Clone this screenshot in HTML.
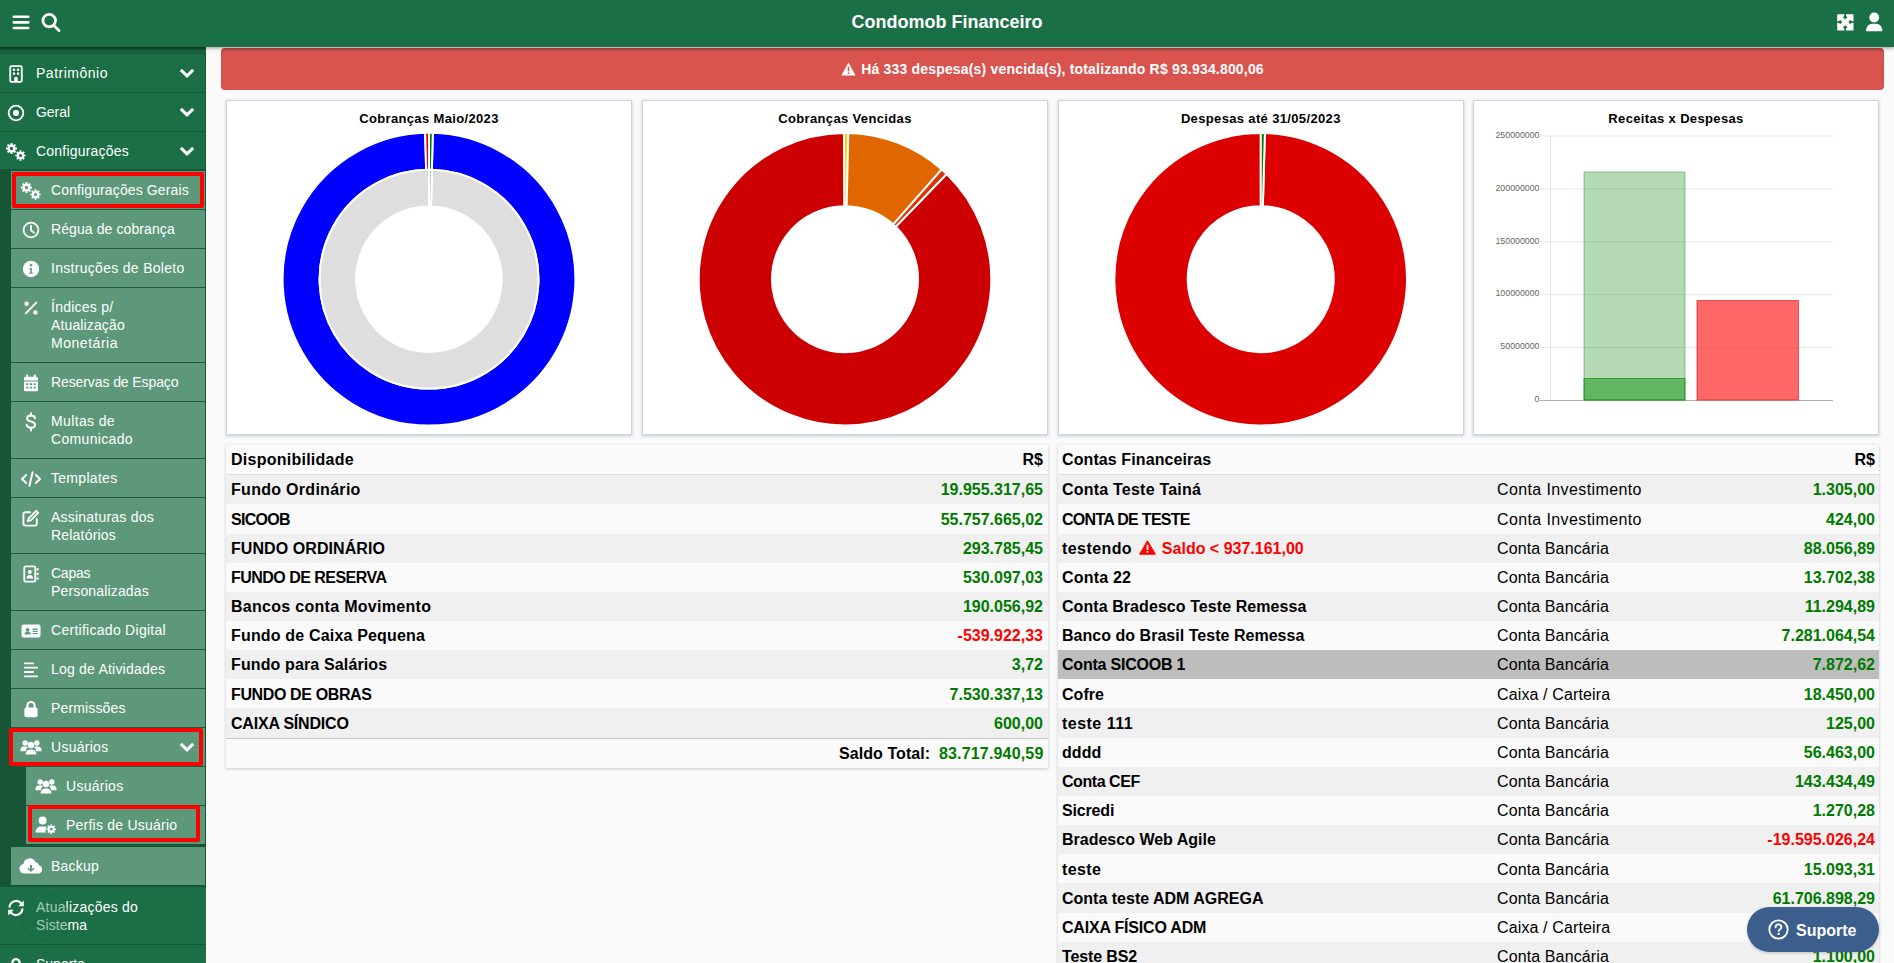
<!DOCTYPE html><html><head><meta charset="utf-8"><title>Condomob Financeiro</title><style>
*{margin:0;padding:0;box-sizing:border-box}
html,body{width:1894px;height:963px;overflow:hidden;background:#fafafa;font-family:"Liberation Sans",sans-serif}
.a{position:absolute}
.hdr{left:0;top:0;width:1894px;height:47px;background:#1b6f47;z-index:5;box-shadow:0 1px 4px rgba(0,0,0,.4)}
.title{left:0;width:1894px;top:11px;text-align:center;color:#fff;font-weight:bold;font-size:18px;line-height:22px}
.sb{left:0;top:46px;width:206px;height:917px;background:#1b6e46;overflow:hidden;border-right:1px solid #155a39}
.it{position:absolute;color:#fff;font-size:14px;line-height:18px;letter-spacing:.15px}
.alert{left:221px;top:48px;width:1663px;height:42px;background:#d9534f;border-radius:4px;color:#fff;font-weight:bold;font-size:14px;letter-spacing:.18px;line-height:42px;text-align:center;box-shadow:inset 0 2px 2px rgba(0,0,0,.15)}
.card{background:#fff;border:1px solid #ccd4de;box-shadow:0 1px 3px rgba(40,50,80,.25)}
.ct{position:absolute;left:0;right:0;top:9px;text-align:center;font-weight:bold;font-size:13px;letter-spacing:.35px;line-height:16px;color:#000}
.tbl{background:#fafafa;box-shadow:0 1px 3px rgba(40,50,80,.25)}
.row{position:absolute;left:0;right:0;height:29.27px}
.odd{background:#f0f0f0}
.tx{position:absolute;font-size:16px;line-height:21px;top:4px;color:#000;white-space:nowrap}
.b{font-weight:bold}
.g{color:#007a00;font-weight:bold}
.r{color:#f00;font-weight:bold}
</style></head><body>
<div class="a hdr">
<svg class="a" style="left:11px;top:13px" width="20" height="18" viewBox="0 0 20 18"><g stroke="#fff" stroke-width="2.6" stroke-linecap="round"><line x1="2.8" y1="3.7" x2="17.2" y2="3.7"/><line x1="2.8" y1="9.4" x2="17.2" y2="9.4"/><line x1="2.8" y1="15" x2="17.2" y2="15"/></g></svg>
<svg class="a" style="left:40px;top:12px" width="22" height="21" viewBox="0 0 22 21"><circle cx="9.2" cy="8.6" r="6.3" fill="none" stroke="#fff" stroke-width="2.8"/><line x1="13.8" y1="13.5" x2="19" y2="18.5" stroke="#fff" stroke-width="2.8" stroke-linecap="round"/></svg>
<div class="a title">Condomob Financeiro</div>
<svg class="a" style="left:1837px;top:14px" width="17" height="17" viewBox="0 0 17 17"><rect x="0.2" y="0.2" width="16.3" height="16.2" rx=".4" fill="#fff"/><g fill="#1b6f47"><path d="M8.2 1.2l2.3 2-2.3 2-2.3-2z"/><rect x="7.4" y="0" width="1.6" height="2.4"/><path d="M8.2 11.2l2.3 2-2.3 2-2.3-2z"/><rect x="7.4" y="14" width="1.6" height="3"/><path d="M3.2 5.7l2 2.3-2 2.3-2-2.3z"/><rect x="0" y="7.2" width="2.4" height="1.6"/><path d="M13.3 5.7l2 2.3-2 2.3-2-2.3z"/><rect x="14.2" y="7.2" width="3" height="1.6"/></g></svg>
<svg class="a" style="left:1865px;top:12px" width="19" height="21" viewBox="0 0 19 21"><g fill="#fff"><circle cx="9.2" cy="5.5" r="4.9"/><path d="M1 19.3c0-4.6 3-7.5 6-7.5h4.4c3 0 6 2.9 6 7.5z"/></g></svg>
</div>
<div class="a sb"></div>
<div class="a" style="left:0px;top:46px;width:206px;height:7px;background:#1a6843;background:linear-gradient(#0e3f27,#17603d 60%,#1a6843)"></div>
<div class="a" style="left:0px;top:53px;width:206px;height:1px;background:#145a38;"></div>
<div class="a" style="left:0px;top:92px;width:206px;height:1px;background:#145a38;"></div>
<div class="a" style="left:0px;top:131px;width:206px;height:1px;background:#145a38;"></div>
<svg class="a" style="left:9px;top:65px" width="14" height="18" viewBox="0 0 14 18"><rect x="1.2" y="1.2" width="11.6" height="15.6" rx="1.3" fill="none" stroke="#fff" stroke-width="1.8"/><g fill="#fff"><rect x="3.8" y="3.6" width="2.3" height="2.3"/><rect x="7.9" y="3.6" width="2.3" height="2.3"/><rect x="3.8" y="7.5" width="2.3" height="2.3"/><rect x="7.9" y="7.5" width="2.3" height="2.3"/><path d="M5.2 16.5v-3a1.8 1.8 0 0 1 3.6 0v3z"/></g></svg>
<div class="it" style="left:36px;top:64.45px;letter-spacing:0;"><span style="letter-spacing:0.511px">Patrimônio</span></div>
<svg class="a" style="left:179px;top:68.3px" width="16" height="10" viewBox="0 0 16 10"><path d="M1.8 1.8l6.2 6 6.2-6" fill="none" stroke="#fff" stroke-width="3" stroke-linecap="butt" stroke-linejoin="miter"/></svg>
<svg class="a" style="left:7px;top:104px" width="18" height="18" viewBox="0 0 18 18"><circle cx="9" cy="9" r="7.3" fill="none" stroke="#fff" stroke-width="1.8"/><circle cx="9" cy="9" r="3.1" fill="#fff"/></svg>
<div class="it" style="left:36px;top:103.45px;letter-spacing:0;"><span style="letter-spacing:-0.044px">Geral</span></div>
<svg class="a" style="left:179px;top:107.3px" width="16" height="10" viewBox="0 0 16 10"><path d="M1.8 1.8l6.2 6 6.2-6" fill="none" stroke="#fff" stroke-width="3" stroke-linecap="butt" stroke-linejoin="miter"/></svg>
<svg class="a" style="left:5px;top:142px" width="22" height="20" viewBox="0 0 22 20"><path fill="#fff" fill-rule="evenodd" d="M5.40 2.62 L5.59 0.97 L7.41 0.97 L7.60 2.62 L8.46 2.98 L9.76 1.95 L11.05 3.24 L10.02 4.54 L10.38 5.40 L12.03 5.59 L12.03 7.41 L10.38 7.60 L10.02 8.46 L11.05 9.76 L9.76 11.05 L8.46 10.02 L7.60 10.38 L7.41 12.03 L5.59 12.03 L5.40 10.38 L4.54 10.02 L3.24 11.05 L1.95 9.76 L2.98 8.46 L2.62 7.60 L0.97 7.41 L0.97 5.59 L2.62 5.40 L2.98 4.54 L1.95 3.24 L3.24 1.95 L4.54 2.98Z M4.80 6.50 a1.70 1.70 0 1 0 3.40 0 a1.70 1.70 0 1 0 -3.40 0Z"/><path fill="#fff" fill-rule="evenodd" d="M14.48 9.90 L14.65 8.37 L16.35 8.37 L16.52 9.90 L17.32 10.23 L18.53 9.27 L19.73 10.47 L18.77 11.68 L19.10 12.48 L20.63 12.65 L20.63 14.35 L19.10 14.52 L18.77 15.32 L19.73 16.53 L18.53 17.73 L17.32 16.77 L16.52 17.10 L16.35 18.63 L14.65 18.63 L14.48 17.10 L13.68 16.77 L12.47 17.73 L11.27 16.53 L12.23 15.32 L11.90 14.52 L10.37 14.35 L10.37 12.65 L11.90 12.48 L12.23 11.68 L11.27 10.47 L12.47 9.27 L13.68 10.23Z M13.90 13.50 a1.60 1.60 0 1 0 3.20 0 a1.60 1.60 0 1 0 -3.20 0Z"/></svg>
<div class="it" style="left:36px;top:142.45px;letter-spacing:0;"><span style="letter-spacing:0.205px">Configurações</span></div>
<svg class="a" style="left:179px;top:146.3px" width="16" height="10" viewBox="0 0 16 10"><path d="M1.8 1.8l6.2 6 6.2-6" fill="none" stroke="#fff" stroke-width="3" stroke-linecap="butt" stroke-linejoin="miter"/></svg>
<div class="a" style="left:0px;top:169px;width:206px;height:718px;background:#165536;"></div>
<div class="a" style="left:11px;top:171px;width:194px;height:38px;background:#5d987a;"></div>
<div class="a" style="left:11px;top:209px;width:194px;height:1px;background:#1a5a3a;"></div>
<svg class="a" style="left:20px;top:181px" width="22" height="20" viewBox="0 0 22 20"><path fill="#fff" fill-rule="evenodd" d="M5.40 2.62 L5.59 0.97 L7.41 0.97 L7.60 2.62 L8.46 2.98 L9.76 1.95 L11.05 3.24 L10.02 4.54 L10.38 5.40 L12.03 5.59 L12.03 7.41 L10.38 7.60 L10.02 8.46 L11.05 9.76 L9.76 11.05 L8.46 10.02 L7.60 10.38 L7.41 12.03 L5.59 12.03 L5.40 10.38 L4.54 10.02 L3.24 11.05 L1.95 9.76 L2.98 8.46 L2.62 7.60 L0.97 7.41 L0.97 5.59 L2.62 5.40 L2.98 4.54 L1.95 3.24 L3.24 1.95 L4.54 2.98Z M4.80 6.50 a1.70 1.70 0 1 0 3.40 0 a1.70 1.70 0 1 0 -3.40 0Z"/><path fill="#fff" fill-rule="evenodd" d="M14.48 9.90 L14.65 8.37 L16.35 8.37 L16.52 9.90 L17.32 10.23 L18.53 9.27 L19.73 10.47 L18.77 11.68 L19.10 12.48 L20.63 12.65 L20.63 14.35 L19.10 14.52 L18.77 15.32 L19.73 16.53 L18.53 17.73 L17.32 16.77 L16.52 17.10 L16.35 18.63 L14.65 18.63 L14.48 17.10 L13.68 16.77 L12.47 17.73 L11.27 16.53 L12.23 15.32 L11.90 14.52 L10.37 14.35 L10.37 12.65 L11.90 12.48 L12.23 11.68 L11.27 10.47 L12.47 9.27 L13.68 10.23Z M13.90 13.50 a1.60 1.60 0 1 0 3.20 0 a1.60 1.60 0 1 0 -3.20 0Z"/></svg>
<div class="it" style="left:51px;top:180.95px;letter-spacing:0;"><span style="letter-spacing:0.118px">Configurações Gerais</span></div>
<div class="a" style="left:11px;top:210px;width:194px;height:38px;background:#5d987a;"></div>
<div class="a" style="left:11px;top:248px;width:194px;height:1px;background:#1a5a3a;"></div>
<svg class="a" style="left:22px;top:221px" width="18" height="18" viewBox="0 0 18 18"><circle cx="9" cy="9" r="7.4" fill="none" stroke="#fff" stroke-width="1.8"/><path d="M9 4.6v4.6l3 2.4" fill="none" stroke="#fff" stroke-width="1.8" stroke-linecap="round" stroke-linejoin="round"/></svg>
<div class="it" style="left:51px;top:219.95px;letter-spacing:0;"><span style="letter-spacing:0.092px">Régua de cobrança</span></div>
<div class="a" style="left:11px;top:249px;width:194px;height:38px;background:#5d987a;"></div>
<div class="a" style="left:11px;top:287px;width:194px;height:1px;background:#1a5a3a;"></div>
<svg class="a" style="left:22px;top:260px" width="18" height="18" viewBox="0 0 18 18"><circle cx="9" cy="9" r="8.2" fill="#fff"/><circle cx="9" cy="5.3" r="1.3" fill="#5d987a"/><path d="M7.4 7.9h2.4v4.6h1v1.3H7.3v-1.3h1v-3.3h-.9z" fill="#5d987a"/></svg>
<div class="it" style="left:51px;top:258.95px;letter-spacing:0;"><span style="letter-spacing:0.300px">Instruções de Boleto</span></div>
<div class="a" style="left:11px;top:288px;width:194px;height:74px;background:#5d987a;"></div>
<div class="a" style="left:11px;top:362px;width:194px;height:1px;background:#1a5a3a;"></div>
<svg class="a" style="left:23px;top:300px" width="16" height="16" viewBox="0 0 16 16"><g fill="#fff"><circle cx="3.6" cy="3.8" r="2.2"/><circle cx="12.4" cy="12.4" r="2.2"/></g><line x1="13.2" y1="2.6" x2="2.8" y2="13.4" stroke="#fff" stroke-width="2" stroke-linecap="round"/></svg>
<div class="it" style="left:51px;top:297.95px;letter-spacing:0;"><span style="letter-spacing:0.239px">Índices p/</span><br><span style="letter-spacing:0.131px">Atualização</span><br><span style="letter-spacing:0.531px">Monetária</span></div>
<div class="a" style="left:11px;top:363px;width:194px;height:38px;background:#5d987a;"></div>
<div class="a" style="left:11px;top:401px;width:194px;height:1px;background:#1a5a3a;"></div>
<svg class="a" style="left:23px;top:374px" width="16" height="18" viewBox="0 0 16 18"><g fill="#fff"><rect x="3.2" y="0.6" width="2" height="3.4" rx=".8"/><rect x="10.8" y="0.6" width="2" height="3.4" rx=".8"/><path d="M1 4.2a1.5 1.5 0 0 1 1.5-1.5h11a1.5 1.5 0 0 1 1.5 1.5V6.5H1z"/><path fill-rule="evenodd" d="M1 7.5h14v8.2a1.5 1.5 0 0 1-1.5 1.5h-11A1.5 1.5 0 0 1 1 15.7zM3.2 9.3v1.7h2.2V9.3zM6.9 9.3v1.7h2.2V9.3zM10.6 9.3v1.7h2.2V9.3zM3.2 12.8v1.7h2.2v-1.7zM6.9 12.8v1.7h2.2v-1.7zM10.6 12.8v1.7h2.2v-1.7z"/></g></svg>
<div class="it" style="left:51px;top:372.95px;letter-spacing:0;"><span style="letter-spacing:-0.097px">Reservas de Espaço</span></div>
<div class="a" style="left:11px;top:402px;width:194px;height:56px;background:#5d987a;"></div>
<div class="a" style="left:11px;top:458px;width:194px;height:1px;background:#1a5a3a;"></div>
<svg class="a" style="left:24px;top:412px" width="14" height="20" viewBox="0 0 14 20"><path d="M11 6.2c-.3-1.6-1.8-2.6-4-2.6-2.3 0-3.9 1.1-3.9 2.9 0 1.8 1.4 2.4 3.9 3 2.6.6 4.1 1.3 4.1 3.2 0 1.8-1.6 3-4.1 3-2.4 0-4-1.1-4.3-2.9" fill="none" stroke="#fff" stroke-width="2" stroke-linecap="round"/><line x1="7" y1="1.2" x2="7" y2="3.6" stroke="#fff" stroke-width="2" stroke-linecap="round"/><line x1="7" y1="15.8" x2="7" y2="18.4" stroke="#fff" stroke-width="2" stroke-linecap="round"/></svg>
<div class="it" style="left:51px;top:411.95px;letter-spacing:0;"><span style="letter-spacing:0.359px">Multas de</span><br><span style="letter-spacing:0.334px">Comunicado</span></div>
<div class="a" style="left:11px;top:459px;width:194px;height:38px;background:#5d987a;"></div>
<div class="a" style="left:11px;top:497px;width:194px;height:1px;background:#1a5a3a;"></div>
<svg class="a" style="left:20px;top:470px" width="22" height="18" viewBox="0 0 22 18"><g fill="none" stroke="#fff" stroke-width="2" stroke-linecap="round" stroke-linejoin="round"><path d="M6.2 5l-4.2 4 4.2 4"/><path d="M15.8 5l4.2 4-4.2 4"/><path d="M12.6 2.2l-3.2 13.6"/></g></svg>
<div class="it" style="left:51px;top:468.95px;letter-spacing:0;"><span style="letter-spacing:0.291px">Templates</span></div>
<div class="a" style="left:11px;top:498px;width:194px;height:55px;background:#5d987a;"></div>
<div class="a" style="left:11px;top:553px;width:194px;height:1px;background:#1a5a3a;"></div>
<svg class="a" style="left:22px;top:509px" width="18" height="18" viewBox="0 0 18 18"><g fill="none" stroke="#fff" stroke-width="1.9" stroke-linejoin="round" stroke-linecap="round"><path d="M8 3.2H3.4A2 2 0 0 0 1.4 5.2v9.4a2 2 0 0 0 2 2h9.4a2 2 0 0 0 2-2V10"/><path d="M14.2 1.8l2 2-7.6 7.6-2.8.8.8-2.8z"/></g></svg>
<div class="it" style="left:51px;top:507.95px;letter-spacing:0;"><span style="letter-spacing:0.221px">Assinaturas dos</span><br><span style="letter-spacing:0.200px">Relatórios</span></div>
<div class="a" style="left:11px;top:554px;width:194px;height:56px;background:#5d987a;"></div>
<div class="a" style="left:11px;top:610px;width:194px;height:1px;background:#1a5a3a;"></div>
<svg class="a" style="left:23px;top:565px" width="16" height="18" viewBox="0 0 16 18"><rect x="1.3" y="1.3" width="11" height="15.4" rx="1.5" fill="none" stroke="#fff" stroke-width="1.8"/><g fill="#fff"><circle cx="6.8" cy="7" r="2"/><path d="M3.4 13.4c0-2 1.4-3.3 3.4-3.3s3.4 1.3 3.4 3.3z"/><rect x="13.6" y="3.2" width="2" height="2.2"/><rect x="13.6" y="7.8" width="2" height="2.2"/><rect x="13.6" y="12.4" width="2" height="2.2"/></g></svg>
<div class="it" style="left:51px;top:563.95px;letter-spacing:0;"><span style="letter-spacing:-0.251px">Capas</span><br><span style="letter-spacing:0.151px">Personalizadas</span></div>
<div class="a" style="left:11px;top:611px;width:194px;height:38px;background:#5d987a;"></div>
<div class="a" style="left:11px;top:649px;width:194px;height:1px;background:#1a5a3a;"></div>
<svg class="a" style="left:21px;top:623px" width="20" height="16" viewBox="0 0 20 16"><path fill="#fff" fill-rule="evenodd" d="M2.5 1.5h15a2 2 0 0 1 2 2v9a2 2 0 0 1-2 2h-15a2 2 0 0 1-2-2v-9a2 2 0 0 1 2-2zM6.6 5a1.9 1.9 0 1 0 .01 0zM3.4 11.6h6.4c0-1.9-1.3-3-3.2-3s-3.2 1.1-3.2 3zM11.6 5.6v1.3h5V5.6zM11.6 7.8v1.3h5V7.8zM11.6 10v1.3h5V10z"/></svg>
<div class="it" style="left:51px;top:620.95px;letter-spacing:0;"><span style="letter-spacing:0.275px">Certificado Digital</span></div>
<div class="a" style="left:11px;top:650px;width:194px;height:38px;background:#5d987a;"></div>
<div class="a" style="left:11px;top:688px;width:194px;height:1px;background:#1a5a3a;"></div>
<svg class="a" style="left:23px;top:661px" width="16" height="18" viewBox="0 0 16 18"><g fill="#fff"><rect x="1" y="1.5" width="10" height="1.8" rx=".6"/><rect x="1" y="5.8" width="14" height="1.8" rx=".6"/><rect x="1" y="10.1" width="10" height="1.8" rx=".6"/><rect x="1" y="14.4" width="14" height="1.8" rx=".6"/></g></svg>
<div class="it" style="left:51px;top:659.95px;letter-spacing:0;"><span style="letter-spacing:0.212px">Log de Atividades</span></div>
<div class="a" style="left:11px;top:689px;width:194px;height:38px;background:#5d987a;"></div>
<div class="a" style="left:11px;top:727px;width:194px;height:1px;background:#1a5a3a;"></div>
<svg class="a" style="left:23px;top:700px" width="16" height="18" viewBox="0 0 16 18"><path d="M4.4 8V5.6a3.6 3.6 0 0 1 7.2 0V8" fill="none" stroke="#fff" stroke-width="2.2"/><rect x="1.4" y="7.6" width="13.2" height="9.6" rx="2" fill="#fff"/></svg>
<div class="it" style="left:51px;top:698.95px;letter-spacing:0;"><span style="letter-spacing:0.139px">Permissões</span></div>
<div class="a" style="left:11px;top:728px;width:194px;height:38px;background:#5d987a;"></div>
<svg class="a" style="left:20px;top:738px" width="22" height="18" viewBox="0 0 22 18"><g fill="#fff"><circle cx="5.2" cy="5" r="2.7"/><circle cx="16.8" cy="5" r="2.7"/><circle cx="11" cy="7" r="3.2"/><path d="M0.4 12.2c0-2.1 1.4-3.6 3.2-3.6h3c.6 0 1.2.2 1.6.5-1.4.9-2.3 2.5-2.4 4.1H.4z"/><path d="M21.6 12.2c0-2.1-1.4-3.6-3.2-3.6h-3c-.6 0-1.2.2-1.6.5 1.4.9 2.3 2.5 2.4 4.1h5.4z"/><path d="M5.6 16.6c0-2.9 1.9-5.1 4.4-5.1h2c2.5 0 4.4 2.2 4.4 5.1z"/></g></svg>
<div class="it" style="left:51px;top:737.95px;letter-spacing:0;"><span style="letter-spacing:0.273px">Usuários</span></div>
<svg class="a" style="left:178.5px;top:742px" width="16" height="10" viewBox="0 0 16 10"><path d="M1.8 1.8l6.2 6 6.2-6" fill="none" stroke="#fff" stroke-width="3" stroke-linecap="butt" stroke-linejoin="miter"/></svg>
<div class="a" style="left:11px;top:766px;width:194px;height:1px;background:#1a5a3a;"></div>
<div class="a" style="left:11px;top:767px;width:15px;height:80px;background:#165536;"></div>
<div class="a" style="left:26px;top:767px;width:179px;height:38px;background:#5d987a;"></div>
<div class="a" style="left:26px;top:805px;width:179px;height:1px;background:#1a5a3a;"></div>
<svg class="a" style="left:35px;top:777px" width="22" height="18" viewBox="0 0 22 18"><g fill="#fff"><circle cx="5.2" cy="5" r="2.7"/><circle cx="16.8" cy="5" r="2.7"/><circle cx="11" cy="7" r="3.2"/><path d="M0.4 12.2c0-2.1 1.4-3.6 3.2-3.6h3c.6 0 1.2.2 1.6.5-1.4.9-2.3 2.5-2.4 4.1H.4z"/><path d="M21.6 12.2c0-2.1-1.4-3.6-3.2-3.6h-3c-.6 0-1.2.2-1.6.5 1.4.9 2.3 2.5 2.4 4.1h5.4z"/><path d="M5.6 16.6c0-2.9 1.9-5.1 4.4-5.1h2c2.5 0 4.4 2.2 4.4 5.1z"/></g></svg>
<div class="it" style="left:66px;top:776.95px;letter-spacing:0;"><span style="letter-spacing:0.273px">Usuários</span></div>
<div class="a" style="left:26px;top:806px;width:179px;height:38px;background:#5d987a;"></div>
<svg class="a" style="left:35px;top:816px" width="22" height="18" viewBox="0 0 22 18"><g fill="#fff"><circle cx="7.6" cy="4.6" r="4"/><path d="M0.6 16.6c0-3.6 2.4-6 5-6h4c.8 0 1.6.2 2.3.5-.9 1-1.4 2.3-1.4 3.7 0 .7.1 1.3.4 1.8z"/></g><path fill="#fff" fill-rule="evenodd" d="M15.26 9.88 L15.42 8.46 L16.98 8.46 L17.14 9.88 L17.88 10.18 L19.00 9.30 L20.10 10.40 L19.22 11.52 L19.52 12.26 L20.94 12.42 L20.94 13.98 L19.52 14.14 L19.22 14.88 L20.10 16.00 L19.00 17.10 L17.88 16.22 L17.14 16.52 L16.98 17.94 L15.42 17.94 L15.26 16.52 L14.52 16.22 L13.40 17.10 L12.30 16.00 L13.18 14.88 L12.88 14.14 L11.46 13.98 L11.46 12.42 L12.88 12.26 L13.18 11.52 L12.30 10.40 L13.40 9.30 L14.52 10.18Z M14.80 13.20 a1.40 1.40 0 1 0 2.80 0 a1.40 1.40 0 1 0 -2.80 0Z"/></svg>
<div class="it" style="left:66px;top:815.95px;letter-spacing:0;"><span style="letter-spacing:0.227px">Perfis de Usuário</span></div>
<div class="a" style="left:11px;top:847px;width:194px;height:38px;background:#5d987a;"></div>
<svg class="a" style="left:19px;top:857px" width="24" height="18" viewBox="0 0 24 18"><path fill="#fff" fill-rule="evenodd" d="M5.5 16.5a4.8 4.8 0 0 1-1.1-9.5A6.3 6.3 0 0 1 16.4 5a4.2 4.2 0 0 1 3.6 3.6 4 4 0 0 1-1 7.9zM11 8v4.2l-1.6-1.6-1 1 3.6 3.5 3.6-3.5-1-1-1.6 1.6V8z"/></svg>
<div class="it" style="left:51px;top:857.15px;letter-spacing:0;"><span style="letter-spacing:0.202px">Backup</span></div>
<div class="a" style="left:0px;top:887px;width:206px;height:57px;background:#1b6e46;"></div>
<div class="a" style="left:0px;top:944px;width:206px;height:1px;background:#145a38;"></div>
<svg class="a" style="left:7px;top:899px" width="18" height="18" viewBox="0 0 18 18"><g fill="none" stroke="#fff" stroke-width="2.2" stroke-linecap="round"><path d="M2.6 7.6A6.6 6.6 0 0 1 14.2 4.4"/><path d="M15.4 10.4A6.6 6.6 0 0 1 3.8 13.6"/></g><g fill="#fff"><path d="M16.8 1.6v5.6h-5.6z"/><path d="M1.2 16.4v-5.6h5.6z"/></g></svg>
<div class="it" style="left:36px;top:897.95px;letter-spacing:0;"><span style="letter-spacing:0.206px">Atualizações do</span><br><span style="letter-spacing:0.091px">Sistema</span></div>
<div class="a" style="left:0px;top:945px;width:206px;height:18px;background:#1b6e46;"></div>
<svg class="a" style="left:7px;top:956px" width="18" height="18" viewBox="0 0 18 18"><path d="M5.4 6.6a3.6 3.6 0 0 1 7.2.2c0 2.2-3.4 2.6-3.4 4.4" fill="none" stroke="#fff" stroke-width="2.4" stroke-linecap="round"/><circle cx="9.2" cy="15.6" r="1.5" fill="#fff"/></svg>
<div class="it" style="left:36px;top:955.15px;letter-spacing:0;">Suporte</div>
<div class="a" style="left:22.5px;top:894px;width:46px;height:46px;border-radius:50%;background:rgba(28,112,72,.4);box-shadow:0 0 1.5px 1px rgba(0,0,0,.06)"></div>
<div class="a" style="left:12px;top:172px;width:192px;height:36px;border:4.5px solid #f00;border-radius:2px"></div>
<div class="a" style="left:9px;top:728px;width:194px;height:38px;border:4.5px solid #f00;border-radius:2px"></div>
<div class="a" style="left:28px;top:805px;width:172px;height:37px;border:4.5px solid #f00;border-radius:2px"></div>
<div class="a alert"><svg style="display:inline-block;vertical-align:-2px;margin-right:5px" width="15" height="14" viewBox="0 0 15 14"><path d="M7.5 0.6L14.6 13.4H0.4z" fill="#fff"/><rect x="6.7" y="4.6" width="1.6" height="4.8" fill="#d9534f"/><rect x="6.7" y="10.4" width="1.6" height="1.6" fill="#d9534f"/></svg>Há 333 despesa(s) vencida(s), totalizando R$ 93.934.800,06</div>
<div class="a card" style="left:226px;top:100px;width:406px;height:335px"></div>
<div class="a card" style="left:642px;top:100px;width:406px;height:335px"></div>
<div class="a card" style="left:1058px;top:100px;width:406px;height:335px"></div>
<div class="a card" style="left:1473px;top:100px;width:406px;height:335px"></div>
<div class="a" style="left:279px;top:110.5px;width:300px;text-align:center;font-weight:bold;font-size:13px;letter-spacing:.35px;line-height:16px;color:#000;white-space:nowrap">Cobranças Maio/2023</div>
<div class="a" style="left:695px;top:110.5px;width:300px;text-align:center;font-weight:bold;font-size:13px;letter-spacing:.35px;line-height:16px;color:#000;white-space:nowrap">Cobranças Vencidas</div>
<div class="a" style="left:1110.8px;top:110.5px;width:300px;text-align:center;font-weight:bold;font-size:13px;letter-spacing:.35px;line-height:16px;color:#000;white-space:nowrap">Despesas até 31/05/2023</div>
<div class="a" style="left:1526px;top:110.5px;width:300px;text-align:center;font-weight:bold;font-size:13px;letter-spacing:.35px;line-height:16px;color:#000;white-space:nowrap">Receitas x Despesas</div>
<svg class="a" style="left:0;top:0" width="1894" height="963"><path d="M432.83 132.85A146.4 146.4 0 1 1 425.17 132.85L426.14 169.84A109.4 109.4 0 1 0 431.86 169.84Z" fill="#0000ff" stroke="#fff" stroke-width="2" stroke-linejoin="miter"/><path d="M425.17 132.85A146.4 146.4 0 0 1 429.00 132.80L429.00 169.80A109.4 109.4 0 0 0 426.14 169.84Z" fill="#e00000" stroke="#fff" stroke-width="2" stroke-linejoin="miter"/><path d="M429.00 132.80A146.4 146.4 0 0 1 432.83 132.85L431.86 169.84A109.4 109.4 0 0 0 429.00 169.80Z" fill="#007a00" stroke="#fff" stroke-width="2" stroke-linejoin="miter"/><path d="M432.05 169.84A109.4 109.4 0 1 1 429.00 169.80L429.00 206.40A72.8 72.8 0 1 0 431.03 206.43Z" fill="#dedede" stroke="#fff" stroke-width="2" stroke-linejoin="miter"/><path d="M429.00 169.80A109.4 109.4 0 0 1 432.05 169.84L431.03 206.43A72.8 72.8 0 0 0 429.00 206.40Z" fill="#9fd19f" stroke="#fff" stroke-width="2" stroke-linejoin="miter"/><path d="M946.63 173.96A146.3 146.3 0 1 1 843.98 132.90L844.49 206.20A73 73 0 1 0 895.71 226.69Z" fill="#cc0000" stroke="#fff" stroke-width="2" stroke-linejoin="miter"/><path d="M843.98 132.90A146.3 146.3 0 0 1 848.32 132.94L846.66 206.22A73 73 0 0 0 844.49 206.20Z" fill="#ffcc00" stroke="#fff" stroke-width="2" stroke-linejoin="miter"/><path d="M848.32 132.94A146.3 146.3 0 0 1 941.75 169.46L893.28 224.44A73 73 0 0 0 846.66 206.22Z" fill="#e06600" stroke="#fff" stroke-width="2" stroke-linejoin="miter"/><path d="M941.75 169.46A146.3 146.3 0 0 1 946.63 173.96L895.71 226.69A73 73 0 0 0 893.28 224.44Z" fill="#dd3300" stroke="#fff" stroke-width="2" stroke-linejoin="miter"/><path d="M1264.88 132.96A146.3 146.3 0 1 1 1260.80 132.90L1260.80 206.20A73 73 0 1 0 1262.84 206.23Z" fill="#dd0000" stroke="#fff" stroke-width="2" stroke-linejoin="miter"/><path d="M1260.80 132.90A146.3 146.3 0 0 1 1264.88 132.96L1262.84 206.23A73 73 0 0 0 1260.80 206.20Z" fill="#008000" stroke="#fff" stroke-width="2" stroke-linejoin="miter"/></svg>
<svg class="a" style="left:0;top:0" width="1894" height="963"><line x1="1540" y1="136.0" x2="1833" y2="136.0" stroke="#e6e6e6" stroke-width="1"/><text x="1539.5" y="137.7" text-anchor="end" font-family="Liberation Sans" font-size="8.8" fill="#666">250000000</text><line x1="1540" y1="188.9" x2="1833" y2="188.9" stroke="#e6e6e6" stroke-width="1"/><text x="1539.5" y="190.6" text-anchor="end" font-family="Liberation Sans" font-size="8.8" fill="#666">200000000</text><line x1="1540" y1="241.8" x2="1833" y2="241.8" stroke="#e6e6e6" stroke-width="1"/><text x="1539.5" y="243.5" text-anchor="end" font-family="Liberation Sans" font-size="8.8" fill="#666">150000000</text><line x1="1540" y1="294.7" x2="1833" y2="294.7" stroke="#e6e6e6" stroke-width="1"/><text x="1539.5" y="296.4" text-anchor="end" font-family="Liberation Sans" font-size="8.8" fill="#666">100000000</text><line x1="1540" y1="347.6" x2="1833" y2="347.6" stroke="#e6e6e6" stroke-width="1"/><text x="1539.5" y="349.3" text-anchor="end" font-family="Liberation Sans" font-size="8.8" fill="#666">50000000</text><line x1="1540" y1="400.5" x2="1833" y2="400.5" stroke="#b0b0b0" stroke-width="1"/><text x="1539.5" y="402.2" text-anchor="end" font-family="Liberation Sans" font-size="8.8" fill="#666">0</text><line x1="1550.5" y1="136" x2="1550.5" y2="400" stroke="#e6e6e6" stroke-width="1"/><rect x="1584" y="172" width="101" height="228" fill="rgba(0,128,0,.29)" stroke="rgba(0,128,0,.4)" stroke-width="1"/><rect x="1584" y="378.5" width="101" height="21.5" fill="rgba(0,140,0,.45)" stroke="rgba(0,128,0,.6)" stroke-width="1"/><rect x="1697" y="300.5" width="101.5" height="99.5" fill="rgba(255,40,40,.7)" stroke="rgba(230,0,0,.6)" stroke-width="1"/></svg>
<div class="a tbl" style="left:226px;top:445px;width:822px;height:323px"></div>
<div class="a" style="left:226px;top:473.60px;width:822px;height:1.60px;background:#dedede"></div>
<div class="a tx b" style="left:231px;top:449.25px;"><span style="letter-spacing:0.251px">Disponibilidade</span></div>
<div class="a tx b" style="right:851px;top:449.25px;">R$</div>
<div class="a" style="left:226px;top:475.20px;width:822px;height:29.16px;background:#f0f0f0"></div>
<div class="a tx b" style="left:231px;top:479.45px;"><span style="letter-spacing:0.291px">Fundo Ordinário</span></div>
<div class="a tx g" style="right:851px;top:479.45px;">19.955.317,65</div>
<div class="a tx b" style="left:231px;top:508.61px;"><span style="letter-spacing:-0.709px">SICOOB</span></div>
<div class="a tx g" style="right:851px;top:508.61px;">55.757.665,02</div>
<div class="a" style="left:226px;top:533.52px;width:822px;height:29.16px;background:#f0f0f0"></div>
<div class="a tx b" style="left:231px;top:537.77px;"><span style="letter-spacing:0.073px">FUNDO ORDINÁRIO</span></div>
<div class="a tx g" style="right:851px;top:537.77px;">293.785,45</div>
<div class="a tx b" style="left:231px;top:566.93px;"><span style="letter-spacing:-0.529px">FUNDO DE RESERVA</span></div>
<div class="a tx g" style="right:851px;top:566.93px;">530.097,03</div>
<div class="a" style="left:226px;top:591.84px;width:822px;height:29.16px;background:#f0f0f0"></div>
<div class="a tx b" style="left:231px;top:596.09px;"><span style="letter-spacing:0.293px">Bancos conta Movimento</span></div>
<div class="a tx g" style="right:851px;top:596.09px;">190.056,92</div>
<div class="a tx b" style="left:231px;top:625.25px;"><span style="letter-spacing:0.172px">Fundo de Caixa Pequena</span></div>
<div class="a tx r" style="right:851px;top:625.25px;">-539.922,33</div>
<div class="a" style="left:226px;top:650.16px;width:822px;height:29.16px;background:#f0f0f0"></div>
<div class="a tx b" style="left:231px;top:654.41px;"><span style="letter-spacing:0.129px">Fundo para Salários</span></div>
<div class="a tx g" style="right:851px;top:654.41px;">3,72</div>
<div class="a tx b" style="left:231px;top:683.57px;"><span style="letter-spacing:-0.370px">FUNDO DE OBRAS</span></div>
<div class="a tx g" style="right:851px;top:683.57px;">7.530.337,13</div>
<div class="a" style="left:226px;top:708.48px;width:822px;height:29.16px;background:#f0f0f0"></div>
<div class="a tx b" style="left:231px;top:712.73px;"><span style="letter-spacing:-0.207px">CAIXA SÍNDICO</span></div>
<div class="a tx g" style="right:851px;top:712.73px;">600,00</div>
<div class="a" style="left:226px;top:738.20px;width:822px;height:1.30px;background:#c8c8c8"></div>
<div class="a tx " style="right:850.5px;top:743.00px;"><span class="b" style="letter-spacing:.05px">Saldo Total:</span>&nbsp; <span class="g" style="letter-spacing:.17px">83.717.940,59</span></div>
<div class="a tbl" style="left:1058px;top:445px;width:821px;height:530px"></div>
<div class="a" style="left:1058px;top:473.60px;width:821px;height:1.60px;background:#dedede"></div>
<div class="a tx b" style="left:1062px;top:449.25px;"><span style="letter-spacing:0.098px">Contas Financeiras</span></div>
<div class="a tx b" style="right:19px;top:449.25px;">R$</div>
<div class="a" style="left:1058px;top:475.20px;width:821px;height:29.16px;background:#f0f0f0"></div>
<div class="a tx b" style="left:1062px;top:479.45px;"><span style="letter-spacing:0.215px">Conta Teste Tainá</span></div>
<div class="a tx " style="left:1497px;top:479.45px;"><span style="letter-spacing:0.391px">Conta Investimento</span></div>
<div class="a tx g" style="right:19px;top:479.45px;">1.305,00</div>
<div class="a tx b" style="left:1062px;top:508.61px;"><span style="letter-spacing:-0.711px">CONTA DE TESTE</span></div>
<div class="a tx " style="left:1497px;top:508.61px;"><span style="letter-spacing:0.391px">Conta Investimento</span></div>
<div class="a tx g" style="right:19px;top:508.61px;">424,00</div>
<div class="a" style="left:1058px;top:533.52px;width:821px;height:29.16px;background:#f0f0f0"></div>
<div class="a tx b" style="left:1062px;top:537.77px;"><span style="letter-spacing:0.423px">testendo</span><svg style="display:inline-block;vertical-align:-1px;margin:0 6px 0 6.8px" width="17" height="15" viewBox="0 0 17 15"><path d="M8.5 0.8L16.4 14.2H0.6z" fill="#f00" stroke="#f00" stroke-width="1" stroke-linejoin="round"/><rect x="7.6" y="4.8" width="1.8" height="5.2" fill="#f0f0f0"/><rect x="7.6" y="11" width="1.8" height="1.8" fill="#f0f0f0"/></svg><span style="color:#f00">Saldo &lt; 937.161,00</span></div>
<div class="a tx " style="left:1497px;top:537.77px;"><span style="letter-spacing:0.116px">Conta Bancária</span></div>
<div class="a tx g" style="right:19px;top:537.77px;">88.056,89</div>
<div class="a tx b" style="left:1062px;top:566.93px;"><span style="letter-spacing:0.184px">Conta 22</span></div>
<div class="a tx " style="left:1497px;top:566.93px;"><span style="letter-spacing:0.116px">Conta Bancária</span></div>
<div class="a tx g" style="right:19px;top:566.93px;">13.702,38</div>
<div class="a" style="left:1058px;top:591.84px;width:821px;height:29.16px;background:#f0f0f0"></div>
<div class="a tx b" style="left:1062px;top:596.09px;"><span style="letter-spacing:0.069px">Conta Bradesco Teste Remessa</span></div>
<div class="a tx " style="left:1497px;top:596.09px;"><span style="letter-spacing:0.116px">Conta Bancária</span></div>
<div class="a tx g" style="right:19px;top:596.09px;">11.294,89</div>
<div class="a tx b" style="left:1062px;top:625.25px;"><span style="letter-spacing:0.028px">Banco do Brasil Teste Remessa</span></div>
<div class="a tx " style="left:1497px;top:625.25px;"><span style="letter-spacing:0.116px">Conta Bancária</span></div>
<div class="a tx g" style="right:19px;top:625.25px;">7.281.064,54</div>
<div class="a" style="left:1058px;top:650.16px;width:821px;height:29.16px;background:#bdbdbd"></div>
<div class="a tx b" style="left:1062px;top:654.41px;"><span style="letter-spacing:-0.216px">Conta SICOOB 1</span></div>
<div class="a tx " style="left:1497px;top:654.41px;"><span style="letter-spacing:0.116px">Conta Bancária</span></div>
<div class="a tx g" style="right:19px;top:654.41px;">7.872,62</div>
<div class="a tx b" style="left:1062px;top:683.57px;"><span style="letter-spacing:0.037px">Cofre</span></div>
<div class="a tx " style="left:1497px;top:683.57px;"><span style="letter-spacing:0.128px">Caixa / Carteira</span></div>
<div class="a tx g" style="right:19px;top:683.57px;">18.450,00</div>
<div class="a" style="left:1058px;top:708.48px;width:821px;height:29.16px;background:#f0f0f0"></div>
<div class="a tx b" style="left:1062px;top:712.73px;"><span style="letter-spacing:0.478px">teste 111</span></div>
<div class="a tx " style="left:1497px;top:712.73px;"><span style="letter-spacing:0.116px">Conta Bancária</span></div>
<div class="a tx g" style="right:19px;top:712.73px;">125,00</div>
<div class="a tx b" style="left:1062px;top:741.89px;"><span style="letter-spacing:0.069px">dddd</span></div>
<div class="a tx " style="left:1497px;top:741.89px;"><span style="letter-spacing:0.116px">Conta Bancária</span></div>
<div class="a tx g" style="right:19px;top:741.89px;">56.463,00</div>
<div class="a" style="left:1058px;top:766.80px;width:821px;height:29.16px;background:#f0f0f0"></div>
<div class="a tx b" style="left:1062px;top:771.05px;"><span style="letter-spacing:-0.448px">Conta CEF</span></div>
<div class="a tx " style="left:1497px;top:771.05px;"><span style="letter-spacing:0.116px">Conta Bancária</span></div>
<div class="a tx g" style="right:19px;top:771.05px;">143.434,49</div>
<div class="a tx b" style="left:1062px;top:800.21px;"><span style="letter-spacing:-0.172px">Sicredi</span></div>
<div class="a tx " style="left:1497px;top:800.21px;"><span style="letter-spacing:0.116px">Conta Bancária</span></div>
<div class="a tx g" style="right:19px;top:800.21px;">1.270,28</div>
<div class="a" style="left:1058px;top:825.12px;width:821px;height:29.16px;background:#f0f0f0"></div>
<div class="a tx b" style="left:1062px;top:829.37px;"><span style="letter-spacing:0.002px">Bradesco Web Agile</span></div>
<div class="a tx " style="left:1497px;top:829.37px;"><span style="letter-spacing:0.116px">Conta Bancária</span></div>
<div class="a tx r" style="right:19px;top:829.37px;">-19.595.026,24</div>
<div class="a tx b" style="left:1062px;top:858.53px;"><span style="letter-spacing:0.405px">teste</span></div>
<div class="a tx " style="left:1497px;top:858.53px;"><span style="letter-spacing:0.116px">Conta Bancária</span></div>
<div class="a tx g" style="right:19px;top:858.53px;">15.093,31</div>
<div class="a" style="left:1058px;top:883.44px;width:821px;height:29.16px;background:#f0f0f0"></div>
<div class="a tx b" style="left:1062px;top:887.69px;"><span style="letter-spacing:-0.001px">Conta teste ADM AGREGA</span></div>
<div class="a tx " style="left:1497px;top:887.69px;"><span style="letter-spacing:0.116px">Conta Bancária</span></div>
<div class="a tx g" style="right:19px;top:887.69px;">61.706.898,29</div>
<div class="a tx b" style="left:1062px;top:916.85px;"><span style="letter-spacing:-0.191px">CAIXA FÍSICO ADM</span></div>
<div class="a tx " style="left:1497px;top:916.85px;"><span style="letter-spacing:0.128px">Caixa / Carteira</span></div>
<div class="a tx g" style="right:19px;top:916.85px;">4.000,00</div>
<div class="a" style="left:1058px;top:941.76px;width:821px;height:29.16px;background:#f0f0f0"></div>
<div class="a tx b" style="left:1062px;top:946.01px;"><span style="letter-spacing:-0.115px">Teste BS2</span></div>
<div class="a tx " style="left:1497px;top:946.01px;"><span style="letter-spacing:0.116px">Conta Bancária</span></div>
<div class="a tx g" style="right:19px;top:946.01px;">1.100,00</div>
<div class="a" style="left:1747px;top:907px;width:132px;height:45px;border-radius:23px;background:#3b5e8c;color:#fff;font-weight:bold;font-size:16px;line-height:47px;box-shadow:0 1px 3px rgba(0,0,0,.2)"><svg class="a" style="left:21px;top:12px" width="21" height="21" viewBox="0 0 21 21"><circle cx="10.5" cy="10.5" r="9.2" fill="none" stroke="#fff" stroke-width="1.8"/><path d="M7.6 8.2a2.9 2.9 0 0 1 5.8.1c0 1.8-2.7 2-2.7 3.6" fill="none" stroke="#fff" stroke-width="1.9" stroke-linecap="round"/><circle cx="10.7" cy="14.9" r="1.2" fill="#fff"/></svg><span class="a" style="left:49px;top:0">Suporte</span></div>
</body></html>
